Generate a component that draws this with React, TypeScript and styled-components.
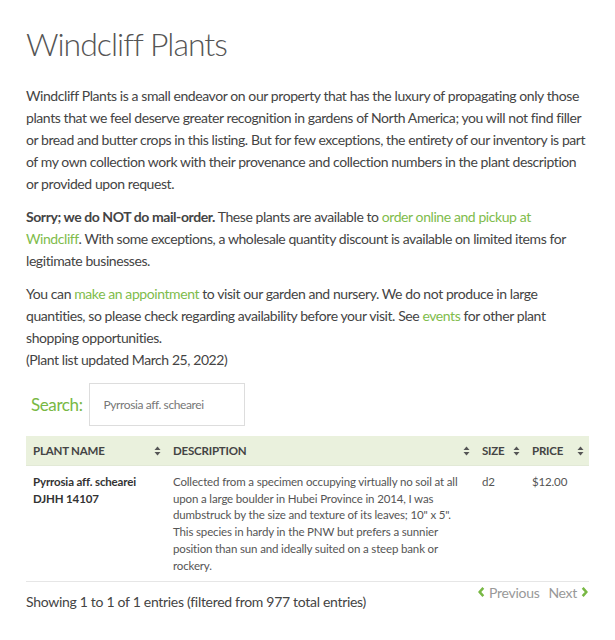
import React from 'react'
import styled, { createGlobalStyle } from 'styled-components'

const GlobalStyle = createGlobalStyle`
  body {
    margin: 0;
    background: #fff;
    font-family: Lato, "Open Sans", sans-serif;
    color: #444;
  }
`

const GREEN = '#78b844'

const Page = styled.div`
  padding: 25px 26px 0 26px;
`

const Title = styled.h1`
  margin: 0 0 22px 0;
  font-size: 32px;
  font-weight: 300;
  line-height: 1.2;
  letter-spacing: -1px;
  color: #555;
`

const Para = styled.p`
  margin: 0 0 11px 0;
  font-size: 14px;
  line-height: 22px;
  letter-spacing: -0.42px;
  color: #444;
`

const Strong = styled.strong`
  font-weight: 700;
`

const Link = styled.a`
  color: #80bc4c;
  text-decoration: none;
`

const SearchRow = styled.div`
  display: flex;
  align-items: center;
  gap: 6px;
  margin: 12px 0 10px 5px;
`

const SearchLabel = styled.label`
  font-size: 17px;
  letter-spacing: -0.4px;
  color: ${GREEN};
`

const SearchInput = styled.input`
  box-sizing: border-box;
  width: 156px;
  height: 43px;
  border: 1px solid #ddd;
  padding: 0 14px;
  font-family: Lato, sans-serif;
  font-size: 12px;
  letter-spacing: -0.4px;
  color: #666;
  outline: none;
  &::placeholder {
    color: #777;
  }
`

const Table = styled.table`
  width: 100%;
  border-collapse: collapse;
  table-layout: fixed;
`

const HeadCell = styled.th<{ w: number }>`
  width: ${({ w }) => w}px;
  background: #eaf1dd;
  text-align: left;
  font-size: 11.5px;
  font-weight: 700;
  letter-spacing: -0.2px;
  color: #444;
  padding: 0 5px 0 7px;
  height: 29px;
  border-bottom: 1px solid #e2e9d6;
  box-sizing: border-box;
`

const HeadInner = styled.div`
  display: flex;
  align-items: center;
  justify-content: space-between;
`

const Cell = styled.td<{ bold?: boolean }>`
  vertical-align: top;
  padding: 8px 8px 6px 7px;
  font-size: 11.5px;
  line-height: 16.8px;
  letter-spacing: -0.15px;
  color: ${({ bold }) => (bold ? '#333' : '#555')};
  font-weight: ${({ bold }) => (bold ? 700 : 400)};
  border-bottom: 1px solid #e6e6e6;
`

const Footer = styled.div`
  display: flex;
  justify-content: space-between;
  align-items: flex-start;
  padding-top: 2px;
`

const Info = styled.div`
  font-size: 14px;
  letter-spacing: -0.3px;
  color: #444;
  padding-top: 9px;
`

const Pager = styled.div`
  display: flex;
  gap: 9px;
  font-size: 14px;
  letter-spacing: -0.3px;
  color: #999;
`

const PageBtn = styled.span`
  display: inline-flex;
  align-items: center;
  gap: 3px;
`

function SortIcon() {
  return (
    <svg width="7" height="10" viewBox="0 0 7 10">
      <path d="M3.5 0.5 L6.5 4 H0.5 Z" fill="#555" />
      <path d="M3.5 9.5 L6.5 6 H0.5 Z" fill="#555" />
    </svg>
  )
}

function Chevron({ dir }: { dir: 'left' | 'right' }) {
  const d = dir === 'left' ? 'M7 1.5 L3 6 L7 10.5' : 'M3 1.5 L7 6 L3 10.5'
  return (
    <svg width="9" height="12" viewBox="0 0 10 12">
      <path d={d} stroke={GREEN} strokeWidth="2.8" fill="none" strokeLinejoin="miter" />
    </svg>
  )
}

const columns = [
  { label: 'PLANT NAME', w: 140 },
  { label: 'DESCRIPTION', w: 309 },
  { label: 'SIZE', w: 50 },
  { label: 'PRICE', w: 64 },
]

export default function App() {
  return (
    <>
      <GlobalStyle />
      <Page>
        <Title>Windcliff Plants</Title>
        <Para>
          Windcliff Plants is a small endeavor on our property that has the luxury of propagating only those
          plants that we feel deserve greater recognition in gardens of North America; you will not find filler
          or bread and butter crops in this listing. But for few exceptions, the entirety of our inventory is
          part of my own collection work with their provenance and collection numbers in the plant
          description or provided upon request.
        </Para>
        <Para>
          <Strong>Sorry; we do NOT do mail-order.</Strong> These plants are available to{' '}
          <Link href="#">order online and pickup at Windcliff</Link>. With some exceptions, a wholesale quantity
          discount is available on limited items for legitimate businesses.
        </Para>
        <Para>
          You can <Link href="#">make an appointment</Link> to visit our garden and nursery. We do not produce in
          large quantities, so please check regarding availability before your visit. See{' '}
          <Link href="#">events</Link> for other plant shopping opportunities.
          <br />
          (Plant list updated March 25, 2022)
        </Para>
        <SearchRow>
          <SearchLabel>Search:</SearchLabel>
          <SearchInput placeholder="Pyrrosia aff. schearei" />
        </SearchRow>
        <Table>
          <thead>
            <tr>
              {columns.map((c) => (
                <HeadCell key={c.label} w={c.w}>
                  <HeadInner>
                    <span>{c.label}</span>
                    <SortIcon />
                  </HeadInner>
                </HeadCell>
              ))}
            </tr>
          </thead>
          <tbody>
            <tr>
              <Cell bold>
                Pyrrosia aff. schearei
                <br />
                DJHH 14107
              </Cell>
              <Cell>
                Collected from a specimen occupying virtually no soil at all upon a large boulder in Hubei Province
                in 2014, I was dumbstruck by the size and texture of its leaves; 10" x 5". This species in hardy in
                the PNW but prefers a sunnier position than sun and ideally suited on a steep bank or rockery.
              </Cell>
              <Cell>d2</Cell>
              <Cell>$12.00</Cell>
            </tr>
          </tbody>
        </Table>
        <Footer>
          <Info>Showing 1 to 1 of 1 entries (filtered from 977 total entries)</Info>
          <Pager>
            <PageBtn>
              <Chevron dir="left" />
              Previous
            </PageBtn>
            <PageBtn>
              Next
              <Chevron dir="right" />
            </PageBtn>
          </Pager>
        </Footer>
      </Page>
    </>
  )
}
